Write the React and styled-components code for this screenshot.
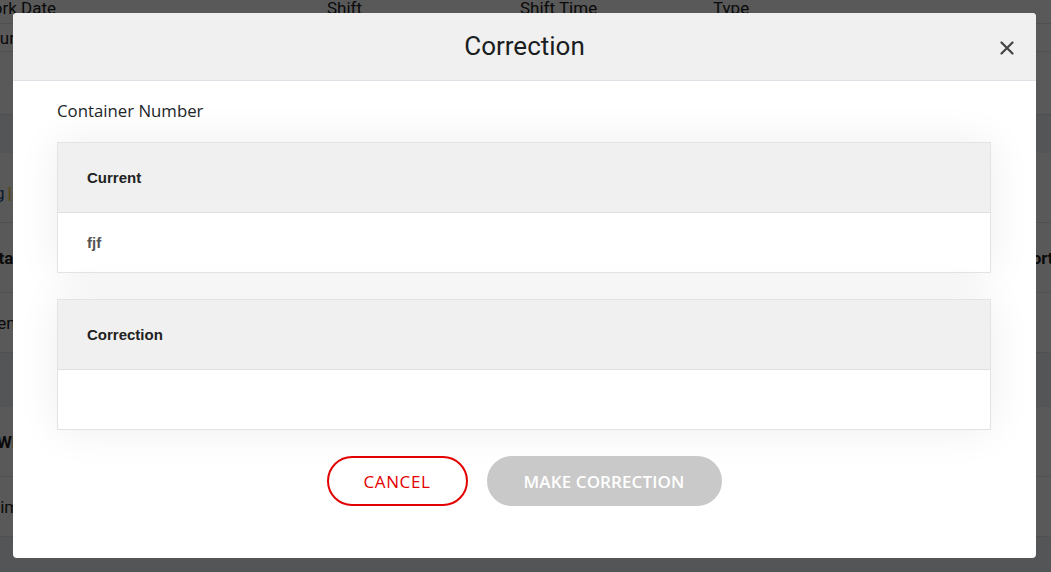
import React from 'react';
import styled, { createGlobalStyle } from 'styled-components';

const GlobalStyle = createGlobalStyle`
  html, body {
    margin: 0;
    padding: 0;
    background: #f0f3f8;
    font-family: "Roboto", "Liberation Sans", sans-serif;
    overflow: hidden;
  }
  * {
    box-sizing: border-box;
  }
`;

const Page = styled.div`
  width: 1051px;
  height: 572px;
  overflow: hidden;
  background: #f0f3f8;
`;

const Band = styled.div`
  display: flex;
  align-items: ${p => (p.top ? 'flex-start' : 'center')};
  height: ${p => p.h}px;
  padding-top: ${p => p.pt || 0}px;
  background: ${p => (p.gray ? '#f0f3f8' : '#ffffff')};
  border-bottom: 1px solid ${p => (p.gray ? '#f0f3f8' : '#e6e6e6')};
  font-size: 17px;
  line-height: 20px;
  font-weight: ${p => (p.bold ? 700 : 400)};
  color: #222;
  position: relative;
`;

const HeadCell = styled.span`
  width: ${p => p.w}px;
  flex: none;
  white-space: nowrap;
  margin-top: -2px;
`;

const Clip = styled.span`
  margin-left: ${p => p.offset}px;
  white-space: nowrap;
`;

const Tag = styled.span`
  margin-left: -5px;
  color: #1f4e8c;
  span {
    color: #e8c200;
    margin-left: 3px;
  }
`;

const RightText = styled.span`
  position: absolute;
  left: 1002px;
  font-weight: 700;
`;

const Overlay = styled.div`
  position: fixed;
  inset: 0;
  background: rgba(0, 0, 0, 0.65);
`;

const Modal = styled.div`
  width: 1023px;
  margin: 13px 0 0 13px;
  background: #fff;
  border-radius: 4px;
  overflow: hidden;
`;

const Header = styled.div`
  display: grid;
  grid-template-columns: 1fr auto 1fr;
  align-items: center;
  height: 68px;
  background: #f0f0f0;
  border-bottom: 1px solid #dee2e6;
`;

const Title = styled.h2`
  grid-column: 2;
  margin: 0 0 2px;
  font-family: "Roboto", sans-serif;
  font-size: 26px;
  font-weight: 400;
  color: #1b1e21;
`;

const Close = styled.button`
  justify-self: end;
  margin: 3px 22px 0 0;
  padding: 0;
  border: none;
  background: none;
  display: flex;
  cursor: pointer;
`;

const Body = styled.div`
  padding: 18px 45px 52px 44px;
`;

const Label = styled.div`
  font-family: "Open Sans", sans-serif;
  font-size: 16.8px;
  line-height: 24px;
  color: #212529;
  margin-bottom: 19px;
`;

const Card = styled.div`
  border: 1px solid #e3e3e3;
  box-shadow: 0 0 40px rgba(0, 0, 0, 0.07);
  margin-bottom: 26px;
  font-family: "Liberation Sans", Arial, sans-serif;
  font-size: 15px;
  font-weight: 700;
`;

const CardHead = styled.div`
  display: flex;
  align-items: center;
  height: 70px;
  padding-left: 29px;
  background: #f0f0f0;
  border-bottom: 1px solid #e0e0e0;
  color: #222;
`;

const CardRow = styled.div`
  display: flex;
  align-items: center;
  height: 59px;
  padding-left: 29px;
  color: #555;
`;

const Actions = styled.div`
  display: flex;
  justify-content: center;
  gap: 19px;
`;

const Button = styled.button`
  height: 50px;
  width: ${p => p.w}px;
  border-radius: 25px;
  font-family: "Open Sans", sans-serif;
  font-size: 17px;
  letter-spacing: ${p => (p.outline ? 0.6 : 0.1)}px;
  cursor: pointer;
  border: 2px solid ${p => (p.outline ? '#e30000' : '#c9c9c9')};
  background: ${p => (p.outline ? '#fff' : '#c9c9c9')};
  color: ${p => (p.outline ? '#e30000' : '#fff')};
  font-weight: ${p => (p.outline ? 400 : 600)};
`;

export default function App() {
  return (
    <>
      <GlobalStyle />
      <Page>
        <Band h={24} top>
          <HeadCell w={327}><Clip offset={-22}>Work Date</Clip></HeadCell>
          <HeadCell w={193}>Shift</HeadCell>
          <HeadCell w={193}>Shift Time</HeadCell>
          <HeadCell w={200}>Type</HeadCell>
        </Band>
        <Band h={28}><Clip offset={-22}>Hours</Clip></Band>
        <Band h={63} />
        <Band h={38} gray />
        <Band h={70} pt={10}><Tag>g<span>|</span></Tag></Band>
        <Band h={70} bold>
          <Clip offset={-12}>Status</Clip>
          <RightText>Report</RightText>
        </Band>
        <Band h={60}><Clip offset={-29}>Green</Clip></Band>
        <Band h={54} gray />
        <Band h={70} bold><Clip offset={-3}>Wh</Clip></Band>
        <Band h={60}><Clip offset={-10}>Time</Clip></Band>
        <Band h={40} gray />
      </Page>
      <Overlay>
        <Modal>
          <Header>
            <Title>Correction</Title>
            <Close aria-label="Close">
              <svg width="14" height="14" viewBox="0 0 14 14">
                <path d="M1.5 1.5 L12.5 12.5 M12.5 1.5 L1.5 12.5" stroke="#444" strokeWidth="2.2" strokeLinecap="round" />
              </svg>
            </Close>
          </Header>
          <Body>
            <Label>Container Number</Label>
            <Card>
              <CardHead>Current</CardHead>
              <CardRow>fjf</CardRow>
            </Card>
            <Card>
              <CardHead>Correction</CardHead>
              <CardRow />
            </Card>
            <Actions>
              <Button outline w={141}>CANCEL</Button>
              <Button w={235} disabled>MAKE CORRECTION</Button>
            </Actions>
          </Body>
        </Modal>
      </Overlay>
    </>
  );
}
